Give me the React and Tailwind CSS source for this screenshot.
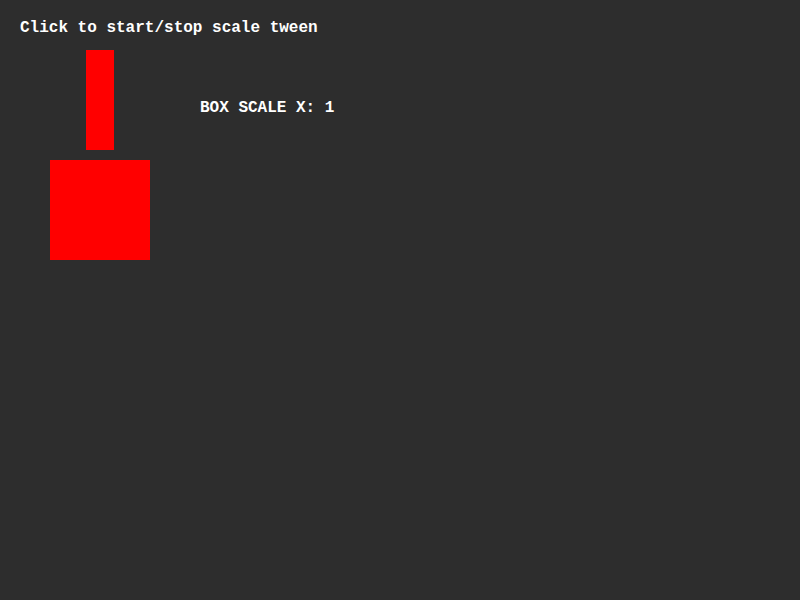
import React from 'react';

function App() {
  return (
    <div className="w-[800px] h-[600px] bg-[#2d2d2d] pt-[20px] pl-[20px] text-white font-bold text-[16px] leading-4 font-['Liberation_Mono',monospace]">
      <p>Click to start/stop scale tween</p>

      <div className="flex mt-[14px]">
        <div className="ml-[30px] w-[100px] flex flex-col gap-[10px]">
          <div className="ml-[36px] w-[28px] h-[100px] bg-[#ff0000]" />
          <div className="w-[100px] h-[100px] bg-[#ff0000]" />
        </div>
        <p className="ml-[50px] mt-[50px]">BOX SCALE X: 1</p>
      </div>
    </div>
  );
}

export default App;
